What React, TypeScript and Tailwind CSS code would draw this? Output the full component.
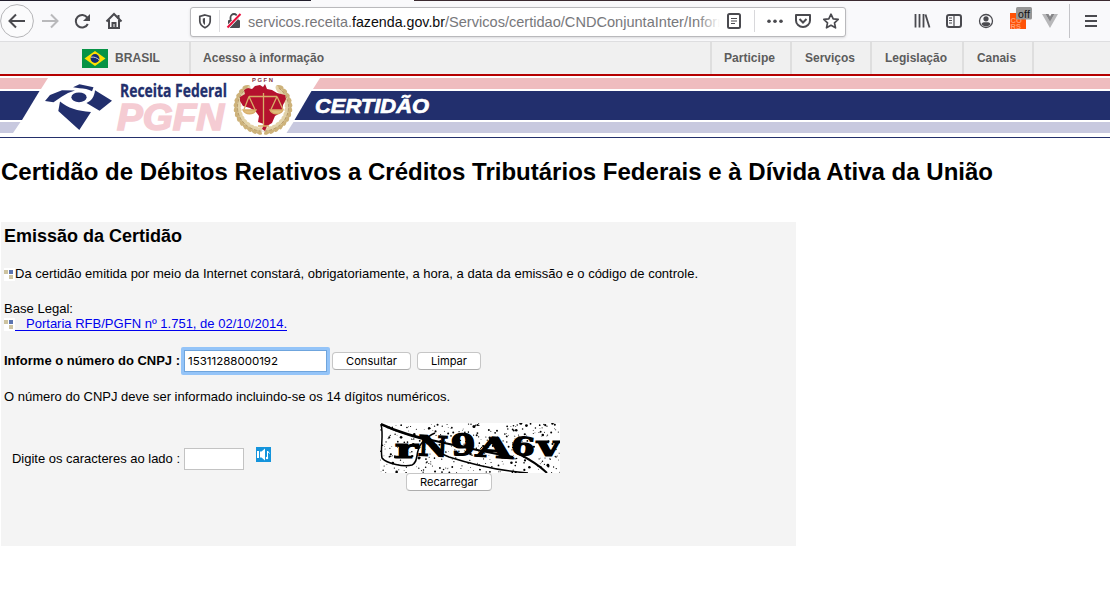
import React from "react";

const ink = "#4a4a4f";

function Line({ x, y, w, size, children, className = "", ...rest }: any) {
  return (
    <text x={x} y={y} fontSize={size} textLength={w} lengthAdjust="spacingAndGlyphs" {...rest}>
      {children}
    </text>
  );
}

/* Text with a fixed advance width, so that rows keep their measure. */
function T({ w, size, children, bold, fill = "#000", h = 16, base = 12, family = "Liberation Sans, Arial, sans-serif" }: any) {
  return (
    <svg width={w} height={h} className="block shrink-0 overflow-visible">
      <Line x={0} y={base} w={w} size={size} fill={fill} fontFamily={family} fontWeight={bold ? 700 : 400}>
        {children}
      </Line>
    </svg>
  );
}

function Toolbar() {
  return (
    <header className="flex h-[42px] w-full flex-col border-b border-b-[#dedee0] bg-[#f9f9fb]">
      <div className="flex h-px w-full shrink-0">
        <div className="w-[311px] bg-[#211d2b]" />
        <div className="w-[103px] bg-[#f9f9fb]" />
        <div className="grow bg-[#3b2a30]" />
      </div>
      <div className="mt-px flex h-[39px] items-center">
        <svg width="190" height="39" viewBox="0 2 190 39" fill="none" stroke={ink} strokeWidth="2" className="shrink-0">
          <circle cx="17" cy="21" r="16.4" fill="#fbfbfc" stroke="#b5b5b8" strokeWidth="1" />
          <path d="M25 21H10M16 14.5L9.5 21l6.5 6.5" />
          <path d="M42 21h15M51 14.5l6.500 6.500-6.500 6.500" stroke="#b9b9bb" />
          <path d="M87.300 17.600A6.300 6.300 0 1 0 87.800 24" />
          <path d="M90 14v7h-7z" fill={ink} stroke="none" />
          <path d="M106.500 21.500L114 14l7.500 7.500" />
          <path d="M109 20v8h10v-8" />
          <path d="M112.500 28v-5h3v5M118.500 15v4" />
        </svg>
        <div className="flex h-[30px] w-[656px] shrink-0 items-center rounded-[3px] border border-[#b9b9bc] bg-white shadow-sm">
          <svg width="57" height="28" viewBox="191 8 57 28" fill="none" className="shrink-0">
            <path d="M205 15l5.200 1.500v4.500c0 3-1.800 5.200-5.200 6.700-3.400-1.500-5.200-3.700-5.200-6.700v-4.500z" stroke={ink} strokeWidth="1.700" />
            <path d="M205 18v7c-1.500-1-2.200-2.200-2.200-4v-2.400z" fill={ink} />
            <path d="M219.500 10v22" stroke="#dddde0" />
            <rect x="228" y="20" width="12" height="8" rx="1" fill={ink} />
            <path d="M230.500 20v-2.500a3.500 3.500 0 0 1 7 0V20" stroke={ink} strokeWidth="1.800" />
            <path d="M227.500 27.500L240.500 14" stroke="#fff" strokeWidth="3.500" />
            <path d="M227.500 27.500L240.500 14" stroke="#e8103c" strokeWidth="2" />
          </svg>
          <svg width="472" height="28" viewBox="248 8 472 28" className="shrink-0" fontFamily="Liberation Sans, Arial, sans-serif">
            <defs>
              <linearGradient id="fade" gradientUnits="userSpaceOnUse" x1="698" x2="720" y1="0" y2="0">
                <stop stopColor="#77777b" />
                <stop offset="1" stopColor="#fff" />
              </linearGradient>
            </defs>
            <Line x={248} y={27} w={104} size={14.5} fill="#77777b">servicos.receita.</Line>
            <Line x={352} y={27} w={93} size={14.5} fill="#0c0c0d">fazenda.gov.br</Line>
            <Line x={445} y={27} w={277} size={14.5} fill="url(#fade)">/Servicos/certidao/CNDConjuntaInter/Inforr</Line>
          </svg>
          <svg width="125" height="28" viewBox="720 8 125 28" fill="none" stroke={ink} className="shrink-0">
            <rect x="728" y="14" width="12" height="14" rx="1.500" strokeWidth="2" />
            <path d="M731 18.500h6M731 21h6M731 23.500h4" strokeWidth="1.200" />
            <path d="M754.500 10v22" stroke="#d8d8db" />
            <g fill={ink} stroke="none">
              <circle cx="769" cy="21.300" r="1.800" />
              <circle cx="775" cy="21.300" r="1.800" />
              <circle cx="781" cy="21.300" r="1.800" />
            </g>
            <path d="M796 15h14v5.500a7 6.500 0 0 1-14 0z" strokeWidth="2" strokeLinejoin="round" />
            <path d="M799.500 19l3.500 3.500 3.500-3.500" strokeWidth="2" />
            <path d="M831 14.200l2.200 4.600 5 .6-3.700 3.400 1 5-4.500-2.500-4.500 2.500 1-5-3.700-3.400 5-.6z" strokeWidth="1.700" strokeLinejoin="round" />
          </svg>
        </div>
        <svg width="264" height="39" viewBox="846 2 264 39" fill="none" stroke={ink} className="shrink-0">
          <path d="M915.500 14v13.500M919.500 14v13.500M923.500 14v13.500M925.500 14.500l4 13" strokeWidth="1.800" />
          <rect x="947" y="15" width="14" height="12" rx="2" strokeWidth="2" />
          <path d="M954 15v12M949 18h3M949 20.500h3M949 23h3" strokeWidth="1.200" />
          <circle cx="986" cy="21" r="6.500" strokeWidth="1.300" />
          <circle cx="986" cy="18.800" r="2.600" fill={ink} stroke="none" />
          <path d="M981.500 24c1-2 2.500-1.800 4.500-1.800s3.500-.2 4.500 1.800c-1 1.500-2.500 2.300-4.500 2.300s-3.500-.8-4.500-2.300z" fill={ink} stroke="none" />
          <rect x="1010" y="13" width="16" height="16" fill="#ff5307" stroke="none" />
          <g fill="#ff9c70" stroke="none" fontFamily="Liberation Sans, sans-serif" fontWeight="700">
            <text x="1010.500" y="22.500" fontSize="7.500">CO</text>
            <text x="1010.500" y="28.500" fontSize="7.500">RS</text>
          </g>
          <rect x="1016" y="7" width="16" height="12.500" rx="1.500" fill="#969696" stroke="none" />
          <text x="1018" y="17.500" fontSize="10.500" textLength="12" fill="#111" stroke="none" fontFamily="Liberation Sans, sans-serif">off</text>
          <path d="M1042 14h3.500l4.500 7.500 4.500-7.500h3.500l-8 14z" fill="#b8b8ba" stroke="none" />
          <path d="M1045.500 14h3l1.500 2.500 1.500-2.500h3l-4.500 7.800z" fill="#858588" stroke="none" />
          <path d="M1069.500 4v34" stroke="#c4c4c8" />
          <path d="M1085 16h12M1085 21h12M1085 26h12" strokeWidth="1.900" />
        </svg>
      </div>
    </header>
  );
}

function GovBar() {
  const items: [string, number, string][] = [
    ["Participe", 51, "w-[80px]"],
    ["Serviços", 50, "w-[80px]"],
    ["Legislação", 62, "w-[92px]"],
    ["Canais", 39, "w-[70px]"],
  ];
  return (
    <nav className="flex h-[34px] border-b-2 border-[#b50000] bg-[#f0f0f0]">
      <div className="flex w-[191px] items-center border-r-2 border-[#dedede] pl-[82px]">
        <svg width="26" height="19" viewBox="0 0 26 19" className="shrink-0">
          <path d="M0 0h26v19H0z" fill="#079345" />
          <path d="M13 2l10.500 7.500L13 17 2.500 9.500z" fill="#fedf00" />
          <circle cx="13" cy="9.500" r="4.400" fill="#152c72" />
          <path d="M9 8.200c3-.5 6 .5 8.200 2.600" stroke="#c7d1d9" fill="none" />
        </svg>
        <div className="ml-[7px]"><T w={45} size={12.5} bold fill="#5c5c5c">BRASIL</T></div>
      </div>
      <div className="ml-[12px] mt-[8px] w-[507px]"><T w={121} size={12} bold fill="#5c5c5c">Acesso à informação</T></div>
      <ul className="flex border-l-2 border-[#dedede]">
        {items.map(([s, w, c]) => (
          <li key={s} className={`${c} flex justify-center border-r-2 border-[#dedede] pr-[3px] pt-[8px]`}>
            <T w={w} size={12} bold fill="#5c5c5c">{s}</T>
          </li>
        ))}
      </ul>
    </nav>
  );
}

function Laurel() {
  const leaves = Array.from({ length: 13 }, (_, i) => {
    const a = ((98 + i * 11) * Math.PI) / 180;
    return { x: 263 + 25.5 * Math.cos(a), y: 31 + 24 * Math.sin(a), r: 98 + i * 11 };
  });
  const side = leaves.map((l, i) => (
    <g key={i} transform={`translate(${l.x} ${l.y}) rotate(${l.r + 90})`}>
      <ellipse cx="0" cy="-1.600" rx="3.800" ry="1.900" transform="rotate(25)" fill="#cdb27a" />
      <ellipse cx="0" cy="1.600" rx="3.800" ry="1.800" transform="rotate(-25)" fill="#e2d2a8" />
      <path d="M-3 0h4" stroke="#a38350" strokeWidth=".6" />
    </g>
  ));
  return (
    <>
      <g>{side}</g>
      <g transform="translate(526 0) scale(-1 1)">{side}</g>
    </>
  );
}

function Banner() {
  return (
    <div className="flex h-[62px] border-b border-[#24306b] bg-white">
      <svg width="320" height="61" viewBox="0 0 320 61" className="shrink-0">
        <path d="M0 2h48l-7 11H0z" fill="#efbcbf" />
        <path d="M0 15h39.500L22 44H0z" fill="#222f6d" />
        <path d="M0 46h20.500L13 57H0z" fill="#c8c9df" />
        <path d="M320 2l-7 11h7z" fill="#efbcbf" />
        <path d="M320 15h-8.500l-17 29H320z" fill="#222f6d" />
        <path d="M320 46h-26.500l-7 11H320z" fill="#c8c9df" />
        <g fill="#222f6d">
          <path d="M45 25L50 19l12-4.800 13 .4-7 2.500-6 3.500-8.500 5.700z" />
          <path d="M73 11.300l6.500-3 14 3-1.500 4c-3.500-2-8-2.800-12.500-3z" />
          <path d="M95 14.300l17 10.400-12.500 10L86.500 27c5-2 8-6.500 8.500-12.700z" />
          <ellipse cx="79" cy="21.300" rx="7.600" ry="4.900" />
          <path d="M60 25.500c8 6.500 17 9.500 31 10.500L79.300 54 58.300 35z" />
        </g>
        <Line x={120} y={20.5} w={107} size={17} fontWeight="700" fontFamily="Open Sans, Noto Sans, sans-serif" fill="#222f6d" stroke="#222f6d" strokeWidth=".3">Receita Federal</Line>
        <Line x={117} y={53.5} w={107} size={36} fontWeight="900" fontStyle="italic" fontFamily="Liberation Sans, Arial, sans-serif" fill="#f5ccd3" stroke="#f5ccd3" strokeWidth="1.600">PGFN</Line>
        <Laurel />
        <path d="M240 21l5-3-1-4 4-2 4 1 3-3 5-1 3 2 2-3 2 5 5 1 5 3 8 2 1 4-3 6-1 7-7 4-3 7-5 3-2 5-3-2 2-5-6-2 1-6-3-4-6-4-7-2-3-5z" fill="#b5122e" />
        <g stroke="#d8ae68" fill="none" strokeWidth="1.300">
          <path d="M263.500 17v33M249 20.500h28M249 20.500l-5 13M249 20.500l6 13M277 20.500l-6 13M277 20.500l6 13M258 50h11" />
          <path d="M243 34h13c-2 5-11 5-13 0zM270 34h13c-2 5-11 5-13 0z" fill="#dfbd7c" />
        </g>
        <Line x={252} y={6} w={21} size={6} fontWeight="700" fontFamily="Liberation Sans, sans-serif" fill="#853141">P G F N</Line>
      </svg>
      <div className="flex grow flex-col gap-[2px] pt-[2px]">
        <div className="h-[11px] bg-[#efbcbf]" />
        <div className="h-[29px] bg-[#222f6d]">
          <svg width="116" height="29" className="-ml-[5px] block overflow-visible">
            <Line x={0} y={22} w={114} size={20} fontWeight="700" fontStyle="italic" fontFamily="Liberation Sans, Arial, sans-serif" fill="#fff" stroke="#fff" strokeWidth=".7">CERTIDÃO</Line>
          </svg>
        </div>
        <div className="h-[11px] bg-[#c8c9df]" />
      </div>
    </div>
  );
}

function Bullet() {
  return (
    <svg width="11" height="13" viewBox="0 0 11 13" className="shrink-0">
      <path d="M0 0h11v13H0z" fill="#fff" />
      <path d="M0 2h4v4H0zM5 7h4v4H5z" fill="#cdc3a0" />
      <path d="M5 2h4v4H5z" fill="#5b74b0" />
    </svg>
  );
}

function Button({ w, label }: { w: number; label: string }) {
  return (
    <button className="flex h-[18px] items-center justify-center rounded-[4px] border border-[#c6c6c6] border-b-[#adadad] bg-white px-[13px]">
      <T w={w} size={11} h={14} base={11} family="Inter, Roboto, sans-serif">{label}</T>
    </button>
  );
}

function Captcha() {
  let seed = 77;
  const rnd = () => {
    seed = (seed * 16807) % 2147483647;
    return seed / 2147483647;
  };
  const dots = Array.from({ length: 380 }, () => [rnd() * 180, rnd() * 50, 0.4 + rnd() * rnd() * 1.2]);
  const glyphs: [string, number, number, number, number, number][] = [
    ["r", 15, 34.5, 23, 26, 0],
    ["N", 38, 33, 30, 28, 3],
    ["9", 71, 32, 25, 29, -4],
    ["A", 96, 34.5, 37, 28, 4],
    ["6", 131, 32, 24, 25, 6],
    ["v", 157, 33, 23, 27, 0],
  ];
  return (
    <svg width="180" height="50" viewBox="0 0 180 50" className="block overflow-hidden bg-white">
      {dots.map(([x, y, r], i) => (
        <circle key={i} cx={x} cy={y} r={r} />
      ))}
      {glyphs.map(([c, x, y, w, s, r]) => (
        <text key={c} x={x} y={y} fontSize={s} textLength={w} lengthAdjust="spacingAndGlyphs" fontFamily="DejaVu Serif, serif" fontWeight="700" stroke="#000" strokeWidth="1.200" transform={`rotate(${r} ${x + w / 2} ${y - 8})`}>
          {c}
        </text>
      ))}
      <g fill="none" stroke="#000" strokeWidth="1.500">
        <path d="M1 1c3 12-1 24 1 34 5 6 22 9 30 7 7-3 3-13 9-21 5-6 9-9 14-11" />
        <path d="M1 1c17 8 34 13 59 18 27 6 51 11 73 15" strokeWidth="2" />
        <path d="M2 2c13 6 25 10 40 14 12 5 10 12 27 18 25 8 52 14 79 16" />
        <path d="M137 30c12 6 21 11 30 20" strokeWidth="2" />
      </g>
    </svg>
  );
}

export default function App() {
  return (
    <div className="h-[616px] w-[1110px] overflow-hidden bg-white">
      <Toolbar />
      <GovBar />
      <Banner />
      <main className="pl-[1px] pt-[20px]">
        <h1><T w={992} size={24} h={32} base={22} bold>Certidão de Débitos Relativos a Créditos Tributários Federais e à Dívida Ativa da União</T></h1>
        <section className="mt-[32px] h-[324px] w-[795px] bg-[#f4f4f4] pl-[3px] pt-[4px]">
          <h2><T w={178} size={18} h={22} base={16} bold>Emissão da Certidão</T></h2>
          <div className="mt-[19px] flex h-[15px] items-center">
            <Bullet />
            <T w={683} size={13} h={15} base={11}>Da certidão emitida por meio da Internet constará, obrigatoriamente, a hora, a data da emissão e o código de controle.</T>
          </div>
          <div className="mt-[20px]"><T w={69} size={13} h={15} base={11}>Base Legal:</T></div>
          <a className="flex h-[15px] items-center">
            <Bullet />
            <span className="mb-[1px] flex h-[14px] w-[272px] border-b border-[#0000ee] pl-[11px]">
              <T w={261} size={13} h={13} base={11} fill="#0000ee">Portaria RFB/PGFN nº 1.751, de 02/10/2014.</T>
            </span>
          </a>
          <div className="mt-[15px] flex h-[28px] items-center">
            <T w={176} size={13} h={16} base={12} bold>Informe o número do CNPJ :</T>
            <div className="ml-[1px] flex h-[28px] w-[149px] items-center rounded-[2px] border-[3px] border-[#94c4f8] bg-[#6fa5dd] p-px">
              <div className="flex h-full w-full items-center bg-white pl-[3px]">
                <T w={90} size={11} h={14} base={11} family="Inter, Roboto, sans-serif">15311288000192</T>
              </div>
            </div>
            <div className="ml-[2px] flex gap-[6px]">
              <Button w={51} label="Consultar" />
              <Button w={36} label="Limpar" />
            </div>
          </div>
          <div className="mt-[14px]"><T w={446} size={13} h={16} base={12}>O número do CNPJ deve ser informado incluindo-se os 14 dígitos numéricos.</T></div>
          <div className="mt-[18px] flex items-start">
            <div className="flex w-[376px] items-center pl-[8px] pt-[25px]">
              <T w={168} size={13} h={16} base={12}>Digite os caracteres ao lado :</T>
              <div className="ml-[4px] h-[22px] w-[60px] border border-[#c3c3c3] bg-white" />
              <svg width="15" height="15" viewBox="0 0 15 15" className="-mt-[10px] ml-[12px]">
                <path d="M0 0h15v15H0z" fill="#1494dc" />
                <path d="M1 4h2v7H1zM4 4.500h1.500L9 1.500v12L5.500 10.500H4z" fill="#fff" />
                <path d="M11.500 11V4l2 2.500" stroke="#fff" fill="none" />
                <circle cx="11" cy="11" r="1.200" fill="#fff" />
              </svg>
            </div>
            <div className="flex flex-col">
              <Captcha />
              <div className="ml-[26px]"><Button w={58} label="Recarregar" /></div>
            </div>
          </div>
        </section>
      </main>
    </div>
  );
}
